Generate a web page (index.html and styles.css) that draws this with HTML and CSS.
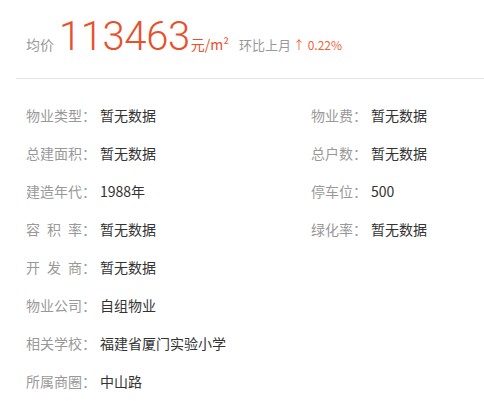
FILE: index.html
```html
<!DOCTYPE html>
<html lang="zh">
<head>
<meta charset="utf-8">
<link rel="stylesheet" href="styles.css">
</head>
<body>
<div class="page">
  <div class="price">
    <span class="lbl">均价</span>
    <span class="num">113463</span>
    <span class="unit">元/m²</span>
    <span class="mom">环比上月</span>
    <span class="up">↑ 0.22%</span>
  </div>
  <div class="divider"></div>
  <div class="grid">
    <div class="item"><span class="k">物业类型：</span><span class="v">暂无数据</span></div>
    <div class="item"><span class="k">物业费：</span><span class="v">暂无数据</span></div>
    <div class="item"><span class="k">总建面积：</span><span class="v">暂无数据</span></div>
    <div class="item"><span class="k">总户数：</span><span class="v">暂无数据</span></div>
    <div class="item"><span class="k">建造年代：</span><span class="v">1988年</span></div>
    <div class="item"><span class="k">停车位：</span><span class="v">500</span></div>
    <div class="item"><span class="k"><span class="j">容积率</span>：</span><span class="v">暂无数据</span></div>
    <div class="item"><span class="k">绿化率：</span><span class="v">暂无数据</span></div>
    <div class="item full"><span class="k"><span class="j">开发商</span>：</span><span class="v">暂无数据</span></div>
    <div class="item full"><span class="k">物业公司：</span><span class="v">自组物业</span></div>
    <div class="item full"><span class="k">相关学校：</span><span class="v">福建省厦门实验小学</span></div>
    <div class="item full"><span class="k">所属商圈：</span><span class="v">中山路</span></div>
  </div>
</div>
</body>
</html>
```
FILE: styles.css
```css
html, body {
  margin: 0;
  padding: 0;
  background: #fff;
}
body {
  font-family: "Noto Sans CJK SC", "Noto Sans", sans-serif;
  color: #333;
}
.price {
  display: flex;
  align-items: baseline;
  padding: 14px 0 0 26px;
  height: 64px;
  box-sizing: border-box;
}
.lbl {
  font-size: 14px;
  color: #999;
  margin-right: 5px;
}
.num {
  font-family: Roboto, "Liberation Sans", Arial, sans-serif;
  font-weight: 300;
  font-size: 40px;
  letter-spacing: -0.4px;
  line-height: 46px;
  color: #e8502a;
}
.unit {
  font-size: 14px;
  color: #e8502a;
  margin-left: 1px;
}
.mom {
  font-size: 13px;
  color: #999;
  margin-left: 10px;
}
.up {
  font-size: 12px;
  color: #f0623a;
  margin-left: 2px;
}
.divider {
  height: 1px;
  background: #e6e6e6;
  margin: 14px 0 0 16px;
}
.grid {
  display: grid;
  grid-template-columns: 285px 1fr;
  padding: 17px 0 0 26px;
}
.item {
  height: 38px;
  line-height: 38px;
  font-size: 14px;
  white-space: nowrap;
}
.item.full {
  grid-column: 1 / -1;
}
.k {
  color: #999;
}
.j {
  display: inline-block;
  width: 56px;
  text-align: justify;
  text-align-last: justify;
  vertical-align: top;
}
.v {
  color: #333;
  margin-left: 4px;
}
```
